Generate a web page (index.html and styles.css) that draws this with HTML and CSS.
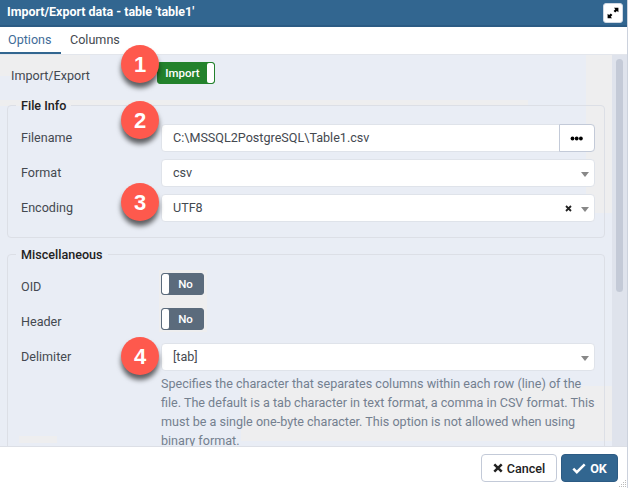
FILE: index.html
```html
<!DOCTYPE html>
<html lang="en">
<head>
<meta charset="utf-8">
<title>Import/Export data</title>
<link rel="stylesheet" href="styles.css">
</head>
<body>
<div class="dialog">
  <header class="titlebar">
    <h1>Import/Export data - table 'table1'</h1>
    <button class="expand" aria-label="Maximize"><svg width="12" height="12" viewBox="0 0 12 12"><path d="M6.900.8h4.500v4.500L9.900 3.900 8.200 5.600 6.600 4 8.300 2.300zM5.100 11.200H.6V6.700l1.500 1.400 1.700-1.700L5.400 8 3.700 9.700z"/></svg></button>
  </header>
  <nav class="tabs"><a class="tab active">Options</a><a class="tab">Columns</a></nav>
  <main class="body">
    <div class="content">
      <div class="row first">
        <label>Import/Export</label>
        <div class="switch on"><span>Import</span><i></i></div>
        <b class="badge">1</b>
      </div>
      <fieldset class="file-info">
        <legend>File Info</legend>
        <div class="row"><label>Filename</label>
          <div class="control file"><span>C:\MSSQL2PostgreSQL\Table1.csv</span><button class="browse" aria-label="Browse"><svg width="14" height="5" viewBox="0 0 14 5"><circle cx="2.500" cy="2.500" r="1.900"/><circle cx="6.700" cy="2.500" r="1.900"/><circle cx="10.900" cy="2.500" r="1.900"/></svg></button></div>
          <b class="badge high">2</b>
        </div>
        <div class="row"><label>Format</label>
          <div class="control"><span>csv</span><i class="caret"></i></div>
        </div>
        <div class="row"><label>Encoding</label>
          <div class="control"><span>UTF8</span><svg class="clear" width="7" height="7" viewBox="0 0 7 7"><path d="M1 1l5 5M6 1L1 6"/></svg><i class="caret"></i></div>
          <b class="badge mid">3</b>
        </div>
      </fieldset>
      <fieldset class="misc">
        <legend>Miscellaneous</legend>
        <div class="row toggle"><label>OID</label><div class="switch off"><i></i><span>No</span></div></div>
        <div class="row toggle"><label>Header</label><div class="switch off"><i></i><span>No</span></div></div>
        <div class="row"><label>Delimiter</label>
          <div class="control"><span>[tab]</span><i class="caret"></i></div>
          <b class="badge low">4</b>
        </div>
        <p class="help">Specifies the character that separates columns within each row (line) of the<br>file. The default is a tab character in text format, a comma in CSV format. This<br>must be a single one-byte character. This option is not allowed when using<br>binary format.</p>
      </fieldset>
    </div>
    <div class="scroll"><div class="thumb"></div></div>
  </main>
  <footer class="footer">
    <button class="btn cancel"><svg width="10" height="10" viewBox="0 0 10 10"><path d="M1.300 1.300l7.400 7.400M8.700 1.300L1.300 8.700"/></svg><span>Cancel</span></button>
    <button class="btn ok"><svg width="14" height="11" viewBox="0 0 14 11"><path d="M1.300 5.700l3.500 3.500L12.700 1.400"/></svg><span>OK</span></button>
    <svg class="grip" width="8" height="8" viewBox="0 0 8 8"><path d="M6 0h1v1H6zM4 2h1v1H4zM6 2h1v1H6zM2 4h1v1H2zM4 4h1v1H4zM6 4h1v1H6zM0 6h1v1H0zM2 6h1v1H2zM4 6h1v1H4zM6 6h1v1H6z"/></svg>
  </footer>
</div>
</body>
</html>
```
FILE: styles.css
```css
* { box-sizing: border-box; }
body { margin: 0; font: 12.58px/19px Roboto, sans-serif; color: #444950; overflow: hidden; }
button { font: inherit; padding: 0; margin: 0; }
.dialog { width: 628px; height: 488px; display: flex; flex-direction: column; background: #fff; border-right: 1px solid #ccd2dd; overflow: hidden; }
.titlebar { height: 27px; flex: none; display: flex; justify-content: space-between; padding: 0 4px 0 7px; background: #326690; border-bottom: 2px solid #2c5b84; }
h1 { margin: 0; font-size: 12.45px; line-height: 24px; font-weight: 700; color: #fff; }
.expand { width: 20px; height: 20px; margin-top: 3px; border: 1px solid #cfd8e3; border-radius: 3px; background: #fff; display: flex; align-items: center; justify-content: center; }
.tabs { height: 27px; flex: none; display: flex; }
.tab { padding: 3px 9px 0; height: 27px; }
.tab.active { padding: 3px 9px 0 8px; width: 61px; color: #3f6c98; border-bottom: 2px solid #326690; }
.body { height: 392px; flex: none; display: flex; border-top: 1px solid #e3e6ec;
  background:
    linear-gradient(#eeeeef, #eeeeef) 0 0 / 90px 21px no-repeat,
    linear-gradient(#eeeeef, #eeeeef) 586px 0 / 27px 158px no-repeat,
    linear-gradient(#eeeeef, #eeeeef) 0 45px / 528px 6px no-repeat,
    linear-gradient(#eeeeef, #eeeeef) 241px 331px / 371px 55px no-repeat,
    linear-gradient(#eeeeef, #eeeeef) 19px 381px / 38px 7px no-repeat,
    linear-gradient(#eeeeef, #eeeeef) 159px 215px / 48px 62px no-repeat,
    #e9edf5; }
.content { flex: 1; min-width: 0; padding: 7px 7px 0; }
.row { position: relative; display: grid; grid-template-columns: 140px 1fr; align-items: center; height: 27px; margin-bottom: 8px; }
.row label { padding-bottom: 1px; }
.row.first { grid-template-columns: 146px 1fr; height: 23px; margin: 0 0 12px; padding-left: 4px; align-items: start; }
.row.first label { padding-top: 4px; }
fieldset { min-width: 0; margin: 0; padding: 0 9px 0 13px; border: 1px solid #dcdfe6; border-radius: 4px; }
legend { padding: 0 5px; margin-left: -5px; font-weight: 500; color: #222; line-height: 17px; }
.file-info { height: 141px; }
.file-info .row:first-of-type { margin-top: 10px; }
.misc { height: 270px; margin-top: 8px; }
.misc .row:first-of-type { margin-top: 10px; }
.control { height: 28px; display: flex; align-items: center; padding: 0 5px 0 11px; background: #fff; border: 1px solid #dfe3ea; border-radius: 4px; }
.control span { flex: 1; padding-bottom: 2px; }
.control.file { padding-right: 0; }
.browse { width: 36px; height: 28px; margin-right: -1px; border: 1px solid #c3cad8; border-radius: 0 4px 4px 0; background: #fff; display: flex; align-items: center; justify-content: center; }
.caret { margin-top: 2px; border: 4px solid transparent; border-top: 5px solid #888; border-bottom: 0; }
.clear { margin-right: 9px; fill: none; stroke: #222; stroke-width: 1.8; }
.toggle { align-items: start; }
.toggle label { padding-top: 4px; }
.switch { height: 22px; display: flex; overflow: hidden; border-radius: 3px; color: #fff; font-size: 11.500px; font-weight: 500; line-height: 20px; text-align: center; }
.switch span { flex: 1; }
.switch i { width: 7px; background: #fff; border-radius: 2px; }
.switch.on { width: 58px; border: 1px solid #23822c; background: #23822c; }
.switch.off { width: 43px; border: 1px solid #5b6b7c; background: #5b6b7c; }
.switch.off span { padding-right: 1px; }
.badge { position: absolute; left: 100px; top: -15px; width: 38px; height: 38px; border-radius: 50%; background: #fe594d; color: #fff; font: 700 22px/40px "Liberation Sans", sans-serif; text-align: center; box-shadow: 0 5px 5px rgba(0,0,0,.6); }
.row.first .badge { left: 114px; top: -17px; }
.badge.high { top: -23px; }
.badge.mid { top: -11px; }
.badge.low { top: -6px; }
.help { margin: -4px 0 0 140px; color: #74808f; white-space: nowrap; }
.scroll { width: 15px; flex: none; background: #dfe3ec; padding: 4px 5px 0 4px; }
.thumb { width: 7px; height: 233px; border-radius: 4px; background: #c4cad7; }
.footer { position: relative; flex: 1; display: flex; justify-content: flex-end; gap: 4px; padding: 7px 9px 0 0; background: #fff; border-top: 1px solid #dcdfe6; }
.btn { height: 28px; border-radius: 4px; display: flex; align-items: center; justify-content: center; gap: 4px; font-weight: 500; }
.btn svg { fill: none; stroke: currentColor; stroke-width: 2.500; }
.cancel { width: 76px; background: #fff; color: #222; border: 1px solid #c3cad8; }
.ok { width: 57px; background: #326690; color: #fff; border: 1px solid #2c5b84; }
.ok span { font-weight: 700; }
.grip { position: absolute; right: 0; bottom: 0; fill: #bbb; }
```
